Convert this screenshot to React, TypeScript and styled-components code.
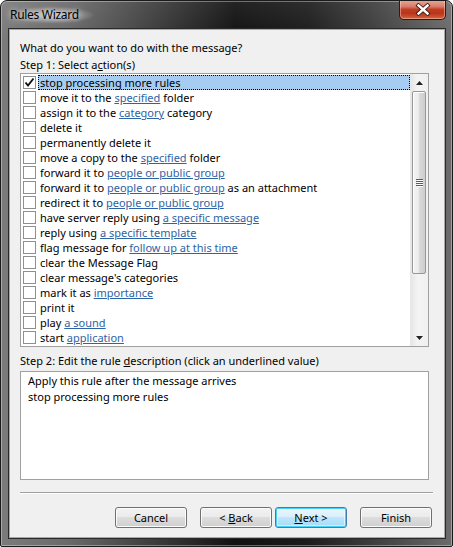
import React from "react";
import styled, { createGlobalStyle } from "styled-components";

const Global = createGlobalStyle`
  html, body { margin: 0; padding: 0; background: #ffffff; }
  body { font-family: "Noto Sans", "Open Sans", sans-serif; font-size: 11px; color: #000; }
  * { box-sizing: border-box; }
`;

const Window = styled.div`
  width: 453px;
  height: 547px;
  display: flex;
  flex-direction: column;
  padding: 0 7px 8px 8px;
  border: 1px solid #1b1b1b;
  border-radius: 7px 7px 2px 2px;
  background:
    linear-gradient(to bottom, rgba(255,255,255,0.08), rgba(0,0,0,0) 40px),
    linear-gradient(to right, #7b7b7b 0%, #6a6a6a 15%, #3a3a3a 35%, #111 52%, #1c1c1c 68%, #3c3c3c 82%, #6c6c6c 100%);
  box-shadow: inset 0 0 0 1px rgba(255,255,255,0.35);
  overflow: hidden;
`;

const TitleBar = styled.div`
  height: 28px;
  display: flex;
  justify-content: space-between;
  align-items: flex-start;
  margin-right: -1px;
`;

const Title = styled.div`
  margin-top: 6px;
  font-size: 12px;
  line-height: 16px;
  color: #000;
  padding: 0 14px 0 1px;
  border-radius: 8px;
  background: radial-gradient(ellipse at center, rgba(215,215,215,0.8) 0%, rgba(190,190,190,0.5) 45%, rgba(160,160,160,0) 75%);
  text-shadow: 0 0 6px rgba(255,255,255,0.9);
  letter-spacing: -0.3px;
`;

const CloseButton = styled.div`
  width: 47px;
  height: 20px;
  margin-top: -1px;
  border: 1px solid #3a1510;
  border-top: none;
  border-radius: 0 0 5px 5px;
  background: linear-gradient(to bottom, #e9a99b 0%, #d77b67 35%, #c23c22 50%, #b8351b 70%, #d5663f 100%);
  box-shadow: inset 0 0 0 1px rgba(255,220,210,0.45);
  display: flex;
  align-items: center;
  justify-content: center;
`;

const Client = styled.div`
  flex: 1;
  display: flex;
  flex-direction: column;
  background: #f0f0f0;
  border: 1px solid #a9a9a9;
  box-shadow: 0 0 0 1px #2a2a2a;
  padding: 10px 12px 0 10px;
`;

const Heading = styled.div`
  line-height: 16px;
  height: 17px;
`;

const StepLabel = styled.div<{ $gap?: number }>`
  line-height: 16px;
  height: 16px;
  margin-top: ${(p) => p.$gap ?? 0}px;
`;

const ListBox = styled.div`
  height: 274px;
  margin-right: 3px;
  border: 1px solid #a0a0a0;
  background: #fff;
  display: flex;
  overflow: hidden;
`;

const Rows = styled.div`
  flex: 1;
  padding: 1px 0 0 2px;
  overflow: hidden;
`;

const Row = styled.div`
  height: 15px;
  display: flex;
  align-items: center;
  white-space: nowrap;
`;

const Check = styled.div`
  width: 13px;
  height: 13px;
  border: 1px solid #8e8f8f;
  background: #fff;
  flex: none;
  display: flex;
  align-items: center;
  justify-content: center;
`;

const Label = styled.div<{ $selected?: boolean }>`
  margin-left: 2px;
  padding: 0 2px;
  height: 15px;
  line-height: 15px;
  flex: ${(p) => (p.$selected ? 1 : "none")};
  background: ${(p) => (p.$selected ? "#a6cdf1" : "transparent")};
  outline: ${(p) => (p.$selected ? "1px dotted #000" : "none")};
  outline-offset: -1px;
`;

const Link = styled.span`
  color: #2e63a6;
  text-decoration: underline;
`;

const ScrollBar = styled.div`
  width: 18px;
  flex: none;
  display: flex;
  flex-direction: column;
  background: linear-gradient(to right, #e6e6e6, #f4f4f4 40%, #f0f0f0);
  border-left: 1px solid #e8e8e8;
`;

const Arrow = styled.div`
  height: 17px;
  display: flex;
  align-items: center;
  justify-content: center;
`;

const Thumb = styled.div`
  height: 183px;
  margin: 0 2px 0 1px;
  border: 1px solid #979797;
  border-radius: 2px;
  background: linear-gradient(to right, #f4f4f4 0%, #ececec 45%, #d9d9d9 55%, #cdcdcd 100%);
  box-shadow: inset 1px 1px 0 #fff;
  display: flex;
  align-items: center;
  justify-content: center;
`;

const Track = styled.div`
  flex: 1;
`;

const Description = styled.div`
  height: 109px;
  margin-top: 2px;
  margin-right: 3px;
  border: 1px solid #a0a0a0;
  background: #fff;
  padding: 1px 7px;
  line-height: 16px;
`;

const Separator = styled.div`
  height: 2px;
  margin-top: 12px;
  margin-right: -1px;
  border-top: 1px solid #a0a0a0;
  border-bottom: 1px solid #fff;
`;

const ButtonRow = styled.div`
  margin-top: 13px;
  display: flex;
  justify-content: flex-end;
`;

const Button = styled.div<{ $default?: boolean; $gap?: number }>`
  width: 72px;
  height: 21px;
  margin-left: ${(p) => p.$gap ?? 0}px;
  display: flex;
  align-items: center;
  justify-content: center;
  line-height: 16px;
  border: 1px solid ${(p) => (p.$default ? "#3c7fb1" : "#707070")};
  border-radius: 3px;
  background: ${(p) =>
    p.$default
      ? "linear-gradient(to bottom, #eaf6fd 0%, #d9f0fc 45%, #bee6fd 50%, #a7d9f5 100%)"
      : "linear-gradient(to bottom, #f2f2f2 0%, #ebebeb 45%, #dddddd 50%, #cfcfcf 100%)"};
  box-shadow: ${(p) =>
    p.$default ? "inset 0 0 0 1px #48d1f8, inset 0 0 0 2px rgba(255,255,255,0.5)" : "inset 0 0 0 1px #fcfcfc"};
`;

type Seg = string | { link: string };

const items: Seg[][] = [
  ["stop processing more rules"],
  ["move it to the ", { link: "specified" }, " folder"],
  ["assign it to the ", { link: "category" }, " category"],
  ["delete it"],
  ["permanently delete it"],
  ["move a copy to the ", { link: "specified" }, " folder"],
  ["forward it to ", { link: "people or public group" }],
  ["forward it to ", { link: "people or public group" }, " as an attachment"],
  ["redirect it to ", { link: "people or public group" }],
  ["have server reply using ", { link: "a specific message" }],
  ["reply using ", { link: "a specific template" }],
  ["flag message for ", { link: "follow up at this time" }],
  ["clear the Message Flag"],
  ["clear message's categories"],
  ["mark it as ", { link: "importance" }],
  ["print it"],
  ["play ", { link: "a sound" }],
  ["start ", { link: "application" }],
];

const CheckMark = () => (
  <svg width="11" height="11" viewBox="0 0 11 11">
    <polyline points="1.5,5.5 4,8.5 9.5,1.5" fill="none" stroke="#111" strokeWidth="1.9" />
  </svg>
);

const CloseGlyph = () => (
  <svg width="16" height="13" viewBox="0 0 16 13">
    <g strokeLinecap="square">
      <path d="M3.5 2.5 L12.5 10.5 M12.5 2.5 L3.5 10.5" stroke="#3b1b14" strokeWidth="4.2" />
      <path d="M3.5 2.5 L12.5 10.5 M12.5 2.5 L3.5 10.5" stroke="#ffffff" strokeWidth="2.4" />
    </g>
  </svg>
);

const UpArrow = () => (
  <svg width="7" height="4" viewBox="0 0 7 4">
    <polygon points="3.5,0 7,4 0,4" fill="#222" />
  </svg>
);

const DownArrow = () => (
  <svg width="7" height="4" viewBox="0 0 7 4">
    <polygon points="0,0 7,0 3.5,4" fill="#222" />
  </svg>
);

const Grip = () => (
  <svg width="7" height="8" viewBox="0 0 7 8">
    {[0, 2, 4, 6].map((y) => (
      <g key={y}>
        <rect x="0" y={y} width="7" height="1" fill="#5a5a5a" />
        <rect x="1" y={y + 1} width="6" height="1" fill="#ffffff" />
      </g>
    ))}
  </svg>
);

export default function App() {
  return (
    <>
      <Global />
      <Window>
        <TitleBar>
          <Title>Rules Wizard</Title>
          <CloseButton>
            <CloseGlyph />
          </CloseButton>
        </TitleBar>
        <Client>
          <Heading>What do you want to do with the message?</Heading>
          <StepLabel>
            Step 1: Select a<u>c</u>tion(s)
          </StepLabel>
          <ListBox>
            <Rows>
              {items.map((segs, i) => (
                <Row key={i}>
                  <Check>{i === 0 && <CheckMark />}</Check>
                  <Label $selected={i === 0}>
                    {segs.map((s, j) =>
                      typeof s === "string" ? <span key={j}>{s}</span> : <Link key={j}>{s.link}</Link>
                    )}
                  </Label>
                </Row>
              ))}
            </Rows>
            <ScrollBar>
              <Arrow>
                <UpArrow />
              </Arrow>
              <Thumb>
                <Grip />
              </Thumb>
              <Track />
              <Arrow>
                <DownArrow />
              </Arrow>
            </ScrollBar>
          </ListBox>
          <StepLabel $gap={6}>
            Step 2: Edit the rule <u>d</u>escription (click an underlined value)
          </StepLabel>
          <Description>
            <div>Apply this rule after the message arrives</div>
            <div>stop processing more rules</div>
          </Description>
          <Separator />
          <ButtonRow>
            <Button>Cancel</Button>
            <Button $gap={13}>
              &lt;&nbsp;<u>B</u>ack
            </Button>
            <Button $gap={3} $default>
              <u>N</u>ext &gt;
            </Button>
            <Button $gap={13}>Finish</Button>
          </ButtonRow>
        </Client>
      </Window>
    </>
  );
}
